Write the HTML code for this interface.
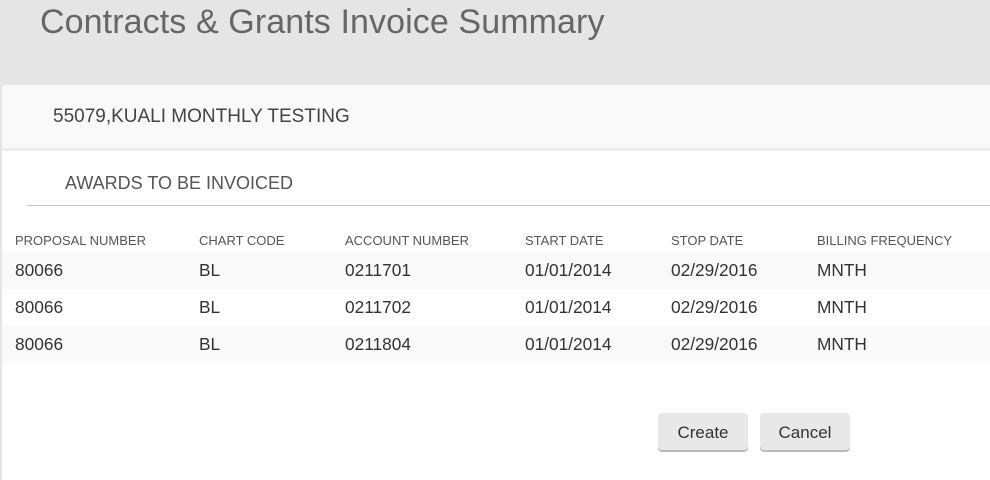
<!DOCTYPE html>
<html><head><style>
body{margin:0;width:990px;height:477px;background:#e5e5e5;font-family:"Liberation Sans",sans-serif;color:#333;overflow:hidden;position:relative}
h1{position:absolute;left:40px;top:0;margin:0;font-weight:300;font-size:34px;color:#666;line-height:44px;letter-spacing:0.1px}
.panel{position:absolute;left:2px;top:85px;width:990px;height:395px;background:#fff;border-radius:4px 0 0 0}
.ph{height:63px;background:#f9f9f9;border-bottom:3px solid #eee;border-radius:4px 0 0 0}
.ph span{position:absolute;left:51px;top:21px;font-size:19px;color:#444}
.sub{position:absolute;left:63px;top:88px;font-size:18px;color:#555}
.rule{position:absolute;left:25px;top:120px;width:965px;height:1px;background:#c4c4c4}
.t{position:absolute;font-size:13px;color:#555;top:148px}
.row{position:absolute;left:0;width:990px;height:37px}
.row span{position:absolute;top:8px;font-size:17.3px;color:#333}
.g{background:#f9f9f9}
.btn{position:absolute;top:328px;width:90px;height:37px;background:#e8e8e8;border-radius:4px;box-shadow:0 2px 0 #bbb;font-size:17px;text-align:center;line-height:39px;color:#333}
</style></head><body>
<h1>Contracts &amp; Grants Invoice Summary</h1>
<div class="panel">
<div class="ph"><span>55079,KUALI MONTHLY TESTING</span></div>
<div class="sub">AWARDS TO BE INVOICED</div>
<div class="rule"></div>
<span class="t" style="left:13px">PROPOSAL NUMBER</span>
<span class="t" style="left:197px">CHART CODE</span>
<span class="t" style="left:343px">ACCOUNT NUMBER</span>
<span class="t" style="left:523px">START DATE</span>
<span class="t" style="left:669px">STOP DATE</span>
<span class="t" style="left:815px">BILLING FREQUENCY</span>
<div class="row g" style="top:167px"><span style="left:13px">80066</span><span style="left:197px">BL</span><span style="left:343px">0211701</span><span style="left:523px">01/01/2014</span><span style="left:669px">02/29/2016</span><span style="left:815px">MNTH</span></div>
<div class="row" style="top:204px"><span style="left:13px">80066</span><span style="left:197px">BL</span><span style="left:343px">0211702</span><span style="left:523px">01/01/2014</span><span style="left:669px">02/29/2016</span><span style="left:815px">MNTH</span></div>
<div class="row g" style="top:241px"><span style="left:13px">80066</span><span style="left:197px">BL</span><span style="left:343px">0211804</span><span style="left:523px">01/01/2014</span><span style="left:669px">02/29/2016</span><span style="left:815px">MNTH</span></div>
<div class="btn" style="left:656px">Create</div>
<div class="btn" style="left:758px">Cancel</div>
</div>
</body></html>
